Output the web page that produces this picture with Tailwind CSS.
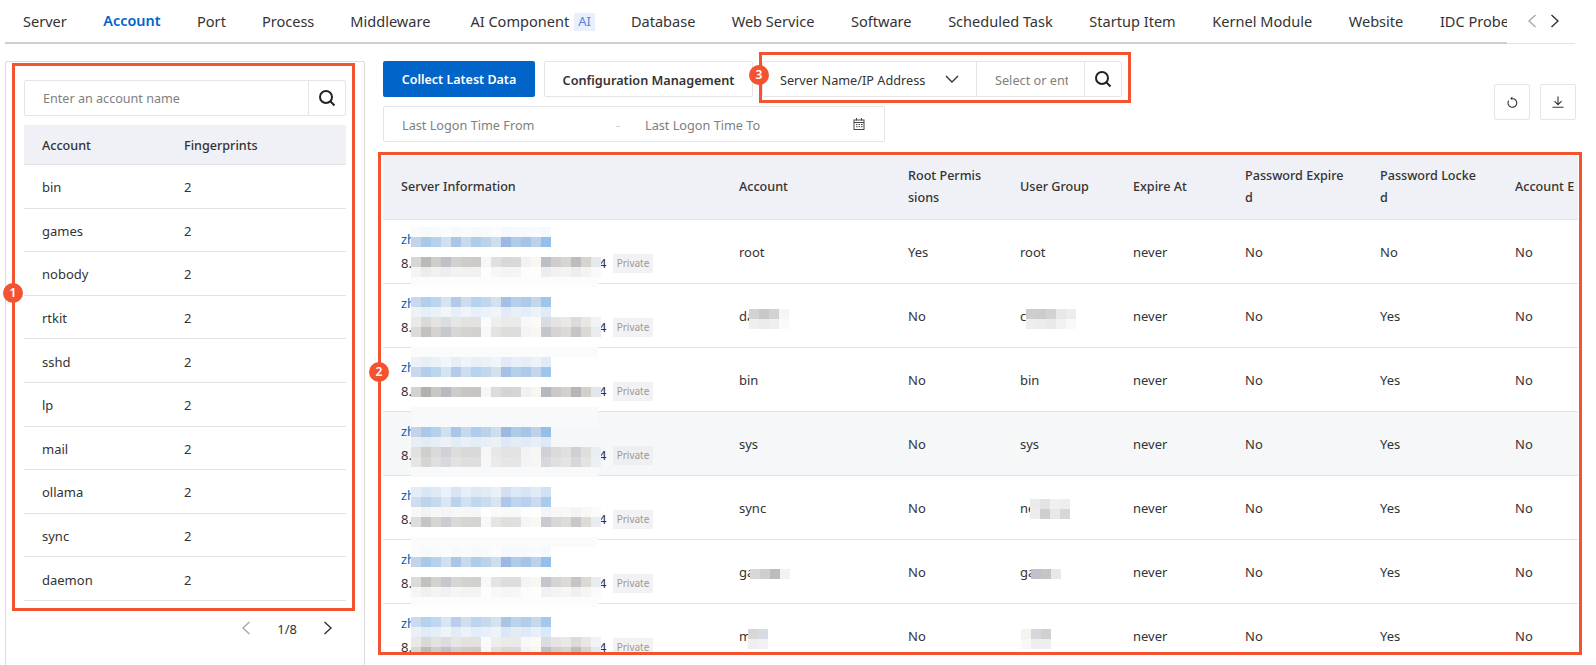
<!DOCTYPE html>
<html lang="en">
<head>
<meta charset="utf-8">
<title>Account fingerprints</title>
<script src="https://cdn.jsdelivr.net/npm/@tailwindcss/browser@4"></script>
</head>
<body class="bg-white">
<div class="relative w-[1596px] h-[665px] overflow-hidden bg-white text-[13px] text-[#333] font-['Noto_Sans',sans-serif]">

  <!-- Tabs -->
  <div class="flex items-stretch ml-[5px] w-[1570px] h-[44px] border-b border-[#e3e3e3]">
    <div class="flex w-[1502px] h-[44px] overflow-hidden border-b-2 border-[#cfd0d3] text-[14.55px] whitespace-nowrap">
      <div class="flex-none h-[44px] px-[18px] flex items-center">Server</div>
      <div class="flex-none h-[44px] px-[18.5px] flex items-center border-b-2 border-[#0064c8] text-[#0064c8] font-semibold text-[14.4px]">Account</div>
      <div class="flex-none h-[44px] px-[18px] flex items-center">Port</div>
      <div class="flex-none h-[44px] px-[18px] flex items-center">Process</div>
      <div class="flex-none h-[44px] pl-[18px] pr-[22px] flex items-center">Middleware</div>
      <div class="flex-none h-[44px] px-[18px] flex items-center gap-[5px]">AI Component<span class="px-[4px] h-[18px] flex items-center bg-[#e9effc] text-[#5b7fe0] text-[13px]">AI</span></div>
      <div class="flex-none h-[44px] px-[18px] flex items-center">Database</div>
      <div class="flex-none h-[44px] px-[18.3px] flex items-center">Web Service</div>
      <div class="flex-none h-[44px] px-[18.3px] flex items-center">Software</div>
      <div class="flex-none h-[44px] px-[18.3px] flex items-center">Scheduled Task</div>
      <div class="flex-none h-[44px] px-[18.3px] flex items-center">Startup Item</div>
      <div class="flex-none h-[44px] px-[18.3px] flex items-center">Kernel Module</div>
      <div class="flex-none h-[44px] px-[18.3px] flex items-center">Website</div>
      <div class="flex-none h-[44px] px-[18.3px] flex items-center">IDC Probe</div>
    </div>
    <div class="flex items-center pb-[2px] pl-[20px] gap-[13px]">
      <svg class="w-[10px] h-[14px]" viewBox="0 0 10 14" fill="none" stroke="#a8a8a8" stroke-width="1.4"><path d="M8.5 1 2 7l6.5 6"/></svg>
      <svg class="w-[10px] h-[14px]" viewBox="0 0 10 14" fill="none" stroke="#333" stroke-width="1.4"><path d="M1.5 1 8 7l-6.5 6"/></svg>
    </div>
  </div>

  <div class="flex pl-[5px] pt-[17px]">
    <!-- Left panel -->
    <div class="flex-none w-[360px] h-[640px] border border-[#dcdcdc] rounded-t-[2px] px-[18px] pt-[18px]">
      <div class="flex w-[322px] h-[36px] border border-[#e5e5e5] rounded-[2px]">
        <div class="flex-1 flex items-center pl-[18px] pt-[3px] text-[12.6px] text-[#808080]">Enter an account name</div>
        <div class="w-[37px] flex items-center justify-center border-l border-[#e5e5e5]">
          <svg class="w-[18px] h-[18px]" viewBox="0 0 18 18" fill="none" stroke="#222" stroke-width="2"><circle cx="8" cy="8" r="6"/><path d="m12.5 12.5 4 4"/></svg>
        </div>
      </div>
      <div class="w-[322px] mt-[9px] [&>div]:pt-[3.5px]">
        <div class="flex items-center h-[40px] bg-[#eff1f6] border-b border-[#e3e3e3] font-medium text-[12.6px]">
          <div class="w-[160px] pl-[18px]">Account</div><div>Fingerprints</div>
        </div>
        <div class="flex items-center h-[43.6px] border-b border-[#e3e3e3]"><div class="w-[160px] pl-[18px]">bin</div><div>2</div></div>
        <div class="flex items-center h-[43.6px] border-b border-[#e3e3e3]"><div class="w-[160px] pl-[18px]">games</div><div>2</div></div>
        <div class="flex items-center h-[43.6px] border-b border-[#e3e3e3]"><div class="w-[160px] pl-[18px]">nobody</div><div>2</div></div>
        <div class="flex items-center h-[43.6px] border-b border-[#e3e3e3]"><div class="w-[160px] pl-[18px]">rtkit</div><div>2</div></div>
        <div class="flex items-center h-[43.6px] border-b border-[#e3e3e3]"><div class="w-[160px] pl-[18px]">sshd</div><div>2</div></div>
        <div class="flex items-center h-[43.6px] border-b border-[#e3e3e3]"><div class="w-[160px] pl-[18px]">lp</div><div>2</div></div>
        <div class="flex items-center h-[43.6px] border-b border-[#e3e3e3]"><div class="w-[160px] pl-[18px]">mail</div><div>2</div></div>
        <div class="flex items-center h-[43.6px] border-b border-[#e3e3e3]"><div class="w-[160px] pl-[18px]">ollama</div><div>2</div></div>
        <div class="flex items-center h-[43.6px] border-b border-[#e3e3e3]"><div class="w-[160px] pl-[18px]">sync</div><div>2</div></div>
        <div class="flex items-center h-[43.6px] border-b border-[#e3e3e3]"><div class="w-[160px] pl-[18px]">daemon</div><div>2</div></div>
      </div>
      <div class="flex items-center justify-end w-[322px] mt-[17px] pr-[13px] h-[20px]">
        <svg class="w-[10px] h-[14px]" viewBox="0 0 10 14" fill="none" stroke="#a8a8a8" stroke-width="1.4"><path d="M8.5 1 2 7l6.5 6"/></svg>
        <span class="mx-[26px] pt-[3px]">1/8</span>
        <svg class="w-[10px] h-[14px]" viewBox="0 0 10 14" fill="none" stroke="#333" stroke-width="1.4"><path d="M1.5 1 8 7l-6.5 6"/></svg>
      </div>
    </div>

    <!-- Right column -->
    <div class="flex-none w-[1213px] pl-[18px]">
      <div class="flex justify-between w-[1193px] h-[81px]">
        <div class="flex flex-col gap-[9px]">
          <div class="flex">
            <div class="w-[152px] h-[36px] flex items-center justify-center pt-[3px] bg-[#0064c8] rounded-[2px] text-white text-[12.5px] font-semibold whitespace-nowrap">Collect Latest Data</div>
            <div class="ml-[9px] w-[209px] h-[36px] flex items-center justify-center pt-[3px] border border-[#e5e5e5] rounded-[2px] text-[12.7px] font-semibold whitespace-nowrap">Configuration Management</div>
            <div class="ml-[9px] w-[360px] h-[36px] flex border border-[#e5e5e5] rounded-[2px] text-[12.7px]">
              <div class="w-[214px] flex items-center pl-[17px] border-r border-[#e5e5e5] whitespace-nowrap"><span class="pt-[3px]">Server Name/IP Address</span>
                <svg class="ml-[20px] w-[14px] h-[8px]" viewBox="0 0 14 8" fill="none" stroke="#333" stroke-width="1.4"><path d="m1 1 6 6 6-6"/></svg>
              </div>
              <div class="w-[108px] flex items-center pl-[18px] pt-[3px] border-r border-[#e5e5e5] text-[#808080] overflow-hidden whitespace-nowrap"><span class="block w-[73px] overflow-hidden">Select or enter</span></div>
              <div class="flex-1 flex items-center justify-center">
                <svg class="w-[18px] h-[18px]" viewBox="0 0 18 18" fill="none" stroke="#222" stroke-width="2"><circle cx="8" cy="8" r="6"/><path d="m12.5 12.5 4 4"/></svg>
              </div>
            </div>
          </div>
          <div class="flex items-center w-[502px] h-[36px] border border-[#e5e5e5] rounded-[2px] text-[12.7px] text-[#808080] pl-[18px] whitespace-nowrap">
            <span class="w-[214px] pt-[3px]">Last Logon Time From</span>
            <span class="w-[29px] pt-[3px] text-[#c8c8c8]">-</span>
            <span class="w-[208px] pt-[3px]">Last Logon Time To</span>
            <svg class="w-[12px] h-[12px]" viewBox="0 0 12 12" fill="none" stroke="#444" stroke-width="1"><rect x="1" y="2" width="10" height="9.5"/><path d="M3.5 0v2.5M8.5 0v2.5M1 4.5h10M3 6.5h1.5M5.5 6.5h1.5M8 6.5h1.5M3 8.7h1.5M5.5 8.7h1.5M8 8.7h1.5"/></svg>
          </div>
        </div>
        <div class="flex gap-[10px] pt-[23px]">
          <div class="w-[36px] h-[36px] flex items-center justify-center border border-[#e5e5e5] rounded-[2px]">
            <svg class="w-[12px] h-[13px]" viewBox="0 0 12 13" fill="none" stroke="#333" stroke-width="1.1"><path d="M6.5 2.5A4.4 4.4 0 1 1 2.6 4.6"/><path d="M6.4.6v3.6L4.2 2.4z" fill="#333" stroke="none"/></svg>
          </div>
          <div class="w-[36px] h-[36px] flex items-center justify-center border border-[#e5e5e5] rounded-[2px]">
            <svg class="w-[12px] h-[12px]" viewBox="0 0 12 12" fill="none" stroke="#333" stroke-width="1.1"><path d="M6 .5v8M2.5 5.2 6 8.7l3.5-3.5M.5 11.3h11"/></svg>
          </div>
        </div>
      </div>

      <!-- Table -->
      <div id="tw" class="relative mt-[14px] w-[1195px] h-[496px] overflow-hidden">
        <table class="table-fixed w-[1249px] border-collapse text-left [&_td:not(:first-child)]:pt-[4px]">
          <thead>
            <tr class="h-[63px] bg-[#eff1f6] border-b border-[#e3e3e3] leading-[22px] text-[12.6px]">
              <th class="w-[338px] px-[18px] pb-[1px] font-medium">Server Information</th>
              <th class="w-[169px] px-[18px] pb-[1px] font-medium">Account</th>
              <th class="w-[112px] px-[18px] pb-[1px] font-medium break-all">Root Permissions</th>
              <th class="w-[113px] px-[18px] pb-[1px] font-medium">User Group</th>
              <th class="w-[112px] px-[18px] pb-[1px] font-medium">Expire At</th>
              <th class="w-[135px] px-[18px] pb-[1px] font-medium break-all">Password Expired</th>
              <th class="w-[135px] px-[18px] pb-[1px] font-medium break-all">Password Locked</th>
              <th class="w-[135px] px-[18px] pb-[1px] font-medium break-all"><div class="w-[59px] overflow-hidden"><div class="w-[99px]">Account Expired</div></div></th>
            </tr>
          </thead>
          <tbody>
            <tr class="h-[64px] border-b border-[#e3e3e3]">
              <td class="px-[18px]"><div class="leading-[24px] text-[#0064c8]">zh</div><div class="flex items-center leading-[24px]"><span class="w-[198px]">8.</span><span class="w-[14px]">4</span><span class="w-[40px] h-[19px] flex items-center justify-center bg-[#f2f2f2] text-[#9a9a9a] text-[10px]">Private</span></div></td>
              <td class="px-[18px]">root</td><td class="px-[18px]">Yes</td><td class="px-[18px]">root</td><td class="px-[18px]">never</td><td class="px-[18px]">No</td><td class="px-[18px]">No</td><td class="px-[18px]">No</td>
            </tr>
            <tr class="h-[64px] border-b border-[#e3e3e3]">
              <td class="px-[18px]"><div class="leading-[24px] text-[#0064c8]">zh</div><div class="flex items-center leading-[24px]"><span class="w-[198px]">8.</span><span class="w-[14px]">4</span><span class="w-[40px] h-[19px] flex items-center justify-center bg-[#f2f2f2] text-[#9a9a9a] text-[10px]">Private</span></div></td>
              <td class="px-[18px]">da</td><td class="px-[18px]">No</td><td class="px-[18px]">c</td><td class="px-[18px]">never</td><td class="px-[18px]">No</td><td class="px-[18px]">Yes</td><td class="px-[18px]">No</td>
            </tr>
            <tr class="h-[64px] border-b border-[#e3e3e3]">
              <td class="px-[18px]"><div class="leading-[24px] text-[#0064c8]">zh</div><div class="flex items-center leading-[24px]"><span class="w-[198px]">8.</span><span class="w-[14px]">4</span><span class="w-[40px] h-[19px] flex items-center justify-center bg-[#f2f2f2] text-[#9a9a9a] text-[10px]">Private</span></div></td>
              <td class="px-[18px]">bin</td><td class="px-[18px]">No</td><td class="px-[18px]">bin</td><td class="px-[18px]">never</td><td class="px-[18px]">No</td><td class="px-[18px]">Yes</td><td class="px-[18px]">No</td>
            </tr>
            <tr class="h-[64px] border-b border-[#e3e3e3] bg-[#f6f7f9]">
              <td class="px-[18px]"><div class="leading-[24px] text-[#0064c8]">zh</div><div class="flex items-center leading-[24px]"><span class="w-[198px]">8.</span><span class="w-[14px]">4</span><span class="w-[40px] h-[19px] flex items-center justify-center bg-[#eeeff1] text-[#9a9a9a] text-[10px]">Private</span></div></td>
              <td class="px-[18px]">sys</td><td class="px-[18px]">No</td><td class="px-[18px]">sys</td><td class="px-[18px]">never</td><td class="px-[18px]">No</td><td class="px-[18px]">Yes</td><td class="px-[18px]">No</td>
            </tr>
            <tr class="h-[64px] border-b border-[#e3e3e3]">
              <td class="px-[18px]"><div class="leading-[24px] text-[#0064c8]">zh</div><div class="flex items-center leading-[24px]"><span class="w-[198px]">8.</span><span class="w-[14px]">4</span><span class="w-[40px] h-[19px] flex items-center justify-center bg-[#f2f2f2] text-[#9a9a9a] text-[10px]">Private</span></div></td>
              <td class="px-[18px]">sync</td><td class="px-[18px]">No</td><td class="px-[18px]">ne</td><td class="px-[18px]">never</td><td class="px-[18px]">No</td><td class="px-[18px]">Yes</td><td class="px-[18px]">No</td>
            </tr>
            <tr class="h-[64px] border-b border-[#e3e3e3]">
              <td class="px-[18px]"><div class="leading-[24px] text-[#0064c8]">zh</div><div class="flex items-center leading-[24px]"><span class="w-[198px]">8.</span><span class="w-[14px]">4</span><span class="w-[40px] h-[19px] flex items-center justify-center bg-[#f2f2f2] text-[#9a9a9a] text-[10px]">Private</span></div></td>
              <td class="px-[18px]">ga</td><td class="px-[18px]">No</td><td class="px-[18px]">ga</td><td class="px-[18px]">never</td><td class="px-[18px]">No</td><td class="px-[18px]">Yes</td><td class="px-[18px]">No</td>
            </tr>
            <tr class="h-[64px] border-b border-[#e3e3e3]">
              <td class="px-[18px]"><div class="leading-[24px] text-[#0064c8]">zh</div><div class="flex items-center leading-[24px]"><span class="w-[198px]">8.</span><span class="w-[14px]">4</span><span class="w-[40px] h-[19px] flex items-center justify-center bg-[#f2f2f2] text-[#9a9a9a] text-[10px]">Private</span></div></td>
              <td class="px-[18px]">m</td><td class="px-[18px]">No</td><td class="px-[18px]"></td><td class="px-[18px]">never</td><td class="px-[18px]">No</td><td class="px-[18px]">Yes</td><td class="px-[18px]">No</td>
            </tr>
          </tbody>
        </table>
      </div>
    </div>
  </div>

  <!-- Annotation frames and badges -->
  <div class="absolute left-[12px] top-[63px] w-[343px] h-[548px] border-[3px] border-[#f4532f] pointer-events-none"></div>
  <div class="absolute left-[378px] top-[152px] w-[1204px] h-[503px] border-[3px] border-[#f4532f] pointer-events-none"></div>
  <div class="absolute left-[759px] top-[52px] w-[372px] h-[51px] border-[3px] border-[#f4532f] pointer-events-none"></div>
  <div class="absolute left-[3px] top-[283px] w-[20px] h-[20px] rounded-full bg-[#f4532f] text-white text-[12px] font-semibold flex items-center justify-center">1</div>
  <div class="absolute left-[369px] top-[362px] w-[20px] h-[20px] rounded-full bg-[#f4532f] text-white text-[12px] font-semibold flex items-center justify-center">2</div>
  <div class="absolute left-[749px] top-[65px] w-[20px] h-[20px] rounded-full bg-[#f4532f] text-white text-[12px] font-semibold flex items-center justify-center">3</div>
</div>

<script>
// Pixelated (redacted) areas, drawn from colour data over the table.
const B=["#c3d4ea","#a9c9e8","#b5d1ec","#d1e0f1","#abc5e6","#c7d9ed","#afcdeb","#bcd2ea","#cedeec","#9bb9e2","#afcbe8","#a6c3e8","#bbd2e8","#94bfe9"];
const G=["#d4d2cf","#b3b2b0","#c8c7c5","#b9bac0","#cdccca","#c9c5c2","#c6c5c3","#f5f6f8","#dddcda","#d5d4d2","#d5d5d3","#f0f1f3","#f9f5ef","#b6b8c0","#cbc9c7","#d3d0cc","#b6b6b8","#d3cfca","#e2e6ec"];
const tw=document.getElementById("tw");
function mix(h,a,bg){const p=s=>[1,3,5].map(i=>parseInt(s.substr(i,2),16));const c=p(h),b=p(bg);return "rgb("+c.map((v,i)=>Math.round(v*a+b[i]*(1-a))).join(",")+")";}
function cell(x,y,w,h,c){const d=document.createElement("div");d.className="absolute";d.style.cssText="left:"+(x-383)+"px;top:"+(y-156)+"px;width:"+w+"px;height:"+h+"px;background:"+c;tw.appendChild(d);}
function line(y,pal,a,bg){pal.forEach((c,i)=>cell(411+i*10,y,10,10,mix(c,a,bg)));}
function band(y,h,c){cell(411,y,187,h,c);}
const W="#ffffff",S="#f6f7f9";
[
 [227,.1,1,[[257,.9],[267,.25]],[[277,10,"#fcfcfc"],[247,10,W]],W],
 [297,.9,.3,[[317,.5],[327,.8]],[[337,10,W],[347,10,"#fbfbfb"]],W],
 [357,.3,.9,[[387,1]],[[377,10,W],[397,10,W],[407,20,"#f8f9fa"]],W],
 [427,1,.25,[[447,.6],[457,.5]],[[467,10,"#f8f9fa"]],S],
 [487,.45,.8,[[507,.15],[517,.75]],[[527,10,W],[537,10,"#fbfbfb"]],W],
 [547,.1,1,[[577,.8],[587,.2]],[[597,10,"#fcfcfc"]],W],
 [617,.85,.35,[[637,.5],[647,.9]],[],W]
].forEach(([by,a1,a2,gs,bands,bg])=>{
  bands.forEach(b=>band(b[0],b[1],b[2]));
  line(by,B,a1,bg);line(by+10,B,a2,bg);
  gs.forEach(g=>line(g[0],G,g[1],bg));
});
// Redacted account and group names
[[749,309,"#d4d3d2,#c9c8c8,#d3d2cf,#f6f6fa"],[749,319,"#efefef,#ebebeb,#eeeeee,#fafafa"],
 [1026,309,"#cdcdd0,#cccbcd,#d2d2d2,#e8e8ea,#ededed"],[1026,319,"#eeeeee,#ececec,#e9e9e9,#f2f2f2,#f9f9f9"],
 [1030,499,"#ebebeb,#e3e3e3,#f0f0f0,#eeeeee"],[1030,509,"#ededed,#cfcfcf,#e8e8e8,#d8d6d6"],
 [750,569,"#d8d7d5,#cfcecc,#bcbcbb,#f1f2f7"],[1031,569,"#c0c1cd,#c7c4c1,#e8e8ec"],
 [748,629,"#d8d7d6,#d6dce2"],[748,639,"#eeeeee,#f2f2f4"],
 [1021,629,"#f4f4ee,#d7d6d8,#d0d0d0"],[1021,639,"#f8f8f6,#eeeeef,#edefef"]
].forEach(([x,y,cs])=>{let cx=x;cs.split(",").forEach((c,i)=>{cell(cx,y,10,10,c);cx+=10;});});
</script>
</body>
</html>
